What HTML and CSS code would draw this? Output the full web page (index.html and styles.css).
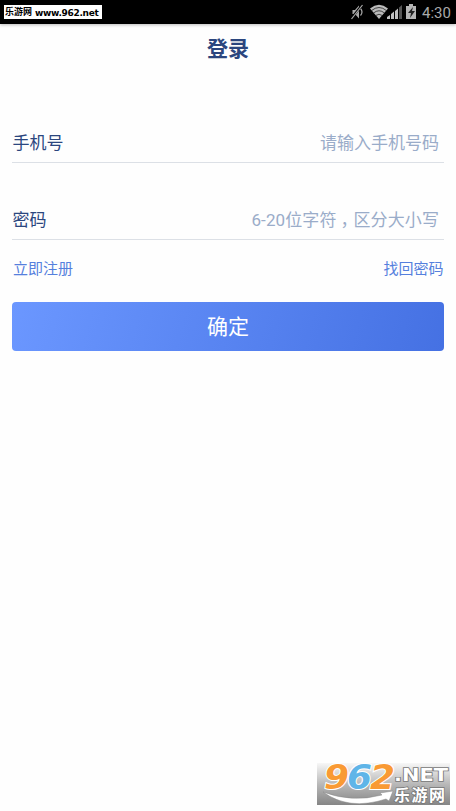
FILE: index.html
```html
<!DOCTYPE html>
<html lang="zh-CN">
<head>
<meta charset="utf-8">
<title>登录</title>
<link rel="stylesheet" href="styles.css">
</head>
<body>
<header class="status">
  <div class="site-tag"><span class="site-name">乐游网</span><span class="site-url">www.962.net</span></div>
  <div class="indicators">
    <svg class="system-icons" width="68" height="18" viewBox="0 0 68 18">
      <path d="M2.500 7h2.500l4-4.500v13l-4-4.500H2.500z" fill="#aaa"/>
      <path d="M10.500 5.500q3 3.500 0 7" fill="none" stroke="#aaa" stroke-width="1.2"/>
      <path d="M1 16L12 2" stroke="#000" stroke-width="2.2"/>
      <path d="M1.500 16L12.500 2" stroke="#aaa" stroke-width="1.2"/>
      <path d="M20 5.400Q29-1.800 38 5.400L29 16z" fill="#bbb"/>
      <path d="M21.500 7.600Q29 1.400 36.500 7.600M23.500 10Q29 5.500 34.500 10M25.700 12.500Q29 10 32.300 12.500" fill="none" stroke="#222" stroke-width=".8"/>
      <path d="M37 16v-2l3-2v4zM41 16v-5l3-2.500V16zM45 16V8l3-2.500V16z" fill="#c0c0c0"/>
      <path d="M49 16V4.500L52 2v14z" fill="#555"/>
      <path d="M56 3h3V1h4v2h3v13H56z" fill="#b5b5b5"/>
      <path d="M63 4l-5 6h3l-1 5 5-7h-3z" fill="#222"/>
    </svg>
    <time class="clock">4:30</time>
  </div>
</header>
<h1 class="title">登录</h1>
<main class="login">
  <div class="field"><span class="label">手机号</span><span class="hint">请输入手机号码</span></div>
  <div class="field field-password"><span class="label">密码</span><span class="hint">6-20位字符<span class="comma">，</span>区分大小写</span></div>
  <nav class="links"><a>立即注册</a><a>找回密码</a></nav>
  <button class="submit" type="button">确定</button>
</main>
<svg class="watermark" width="133" height="42" viewBox="0 0 133 42">
  <defs>
    <linearGradient id="plate" x1="0" y1="0" x2="0" y2="1"><stop offset="0" stop-color="#f7f7f7"/><stop offset=".5" stop-color="#b9b9b9"/><stop offset="1" stop-color="#858585"/></linearGradient>
  </defs>
  <rect width="133" height="42" fill="url(#plate)"/>
  <path d="M6 29Q35 40 65 32L63 30 76 28 72 38 69 36Q32 48 6 29z" fill="#fff" stroke="#888" stroke-width=".5"/>
  <g class="logo-digits">
    <text x="7" y="26" textLength="25" lengthAdjust="spacingAndGlyphs" fill="#f99a34">9</text>
    <text x="30" y="26" textLength="25" lengthAdjust="spacingAndGlyphs" fill="#5fb5e8">6</text>
    <text x="53" y="26" textLength="25" lengthAdjust="spacingAndGlyphs" fill="#f99a34">2</text>
  </g>
  <text class="logo-net" x="77" y="18" textLength="54" lengthAdjust="spacingAndGlyphs">.NET</text>
  <text class="logo-cn" x="77" y="38" textLength="51">乐游网</text>
</svg>
</body>
</html>
```
FILE: styles.css
```css
body {
  margin: 0;
  height: 811px;
  overflow: hidden;
  position: relative;
  background: #fefefe;
  color: #2b467e;
  font-family: Roboto, "Noto Sans CJK SC", sans-serif;
}

.status {
  height: 24px;
  background: #000;
  display: flex;
  justify-content: space-between;
  align-items: flex-start;
  box-shadow: 0 1px 3px #bbb;
}

.site-tag {
  margin: 5px 0 0 4px;
  width: 98px;
  height: 14px;
  box-sizing: border-box;
  padding-left: 1px;
  background: #fff;
  color: #000;
  display: flex;
  gap: 3px;
  line-height: 15px;
  font-weight: bold;
  white-space: nowrap;
}

.site-name {
  font-size: 9px;
}

.site-url {
  font: bold 9px/16px "DejaVu Sans", sans-serif;
  letter-spacing: -0.3px;
}

.indicators {
  display: flex;
  padding: 3px 5px 0 0;
  gap: 4px;
}

.clock {
  width: 29px;
  font-size: 15px;
  line-height: 20px;
  color: #aaa;
}

.title {
  margin: 0;
  height: 49px;
  line-height: 50px;
  text-align: center;
  font-size: 21px;
  font-weight: bold;
}

.login {
  padding: 50px 12px 0;
}

.field {
  height: 39px;
  border-bottom: 1px solid #dce0e6;
  display: flex;
  justify-content: space-between;
  font-size: 17px;
  line-height: 40px;
}

.field-password {
  margin-top: 37px;
}

.label {
  padding-left: 0.5px;
}

.hint {
  color: #9aacc9;
  padding-right: 5px;
}

.field-password .hint {
  letter-spacing: 0.1px;
}

.comma {
  display: inline-block;
  width: 17px;
  text-indent: 4px;
}

.links {
  height: 62px;
  line-height: 59px;
  display: flex;
  justify-content: space-between;
  padding-left: 1px;
  font-size: 15px;
  color: #5580dd;
}

.links a:last-child {
  margin-right: 0.5px;
}

.submit {
  display: block;
  width: 100%;
  height: 49px;
  padding: 0;
  border: 0;
  border-radius: 4px;
  background: linear-gradient(105deg, #6b97ff, #4571e3);
  color: #fff;
  font: 21px/50px Roboto, "Noto Sans CJK SC", sans-serif;
}

.watermark {
  position: absolute;
  left: 317px;
  top: 763px;
  overflow: visible;
}

.logo-digits {
  font: italic bold 33px "DejaVu Sans", sans-serif;
  stroke: #fff;
  stroke-width: 2px;
  paint-order: stroke;
}

.logo-net,
.logo-cn {
  fill: #fff;
  stroke: #777;
  stroke-width: 1.5px;
  paint-order: stroke;
  font: bold 17px "DejaVu Sans", sans-serif;
}

.logo-cn {
  font: bold 16px "Noto Sans CJK SC", sans-serif;
}
```
